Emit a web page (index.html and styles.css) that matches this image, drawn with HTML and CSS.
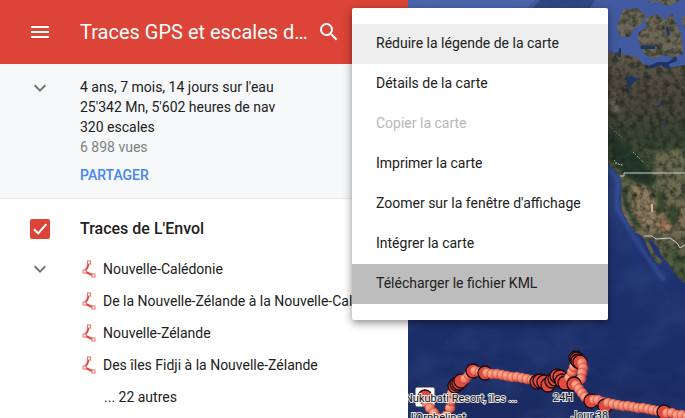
FILE: index.html
```html
<!DOCTYPE html>
<html lang="fr">
<head>
<meta charset="utf-8">
<meta name="viewport" content="width=device-width, initial-scale=1">
<title>Traces GPS et escales</title>
<link rel="stylesheet" href="styles.css">
</head>
<body>
<div class="app">
  <aside class="legend">
    <header class="bar">
      <button class="icon-button" type="button" aria-label="Menu">
        <svg width="24" height="24" viewBox="0 0 24 24"><path fill="#fff" d="M3 18h18v-2H3v2zm0-5h18v-2H3v2zm0-7v2h18V6H3z"/></svg>
      </button>
      <h1 class="title">Traces GPS et escales d…</h1>
      <button class="icon-button" type="button" aria-label="Rechercher">
        <svg width="24" height="24" viewBox="0 0 24 24"><path fill="#fff" d="M15.5 14h-.79l-.28-.27A6.47 6.47 0 0 0 16 9.5 6.5 6.5 0 1 0 9.500 16c1.610 0 3.090-.59 4.230-1.570l.27.28v.79l5 4.990L20.490 19l-4.990-5zm-6 0C7.010 14 5 11.990 5 9.500S7.010 5 9.500 5 14 7.010 14 9.500 11.990 14 9.500 14z"/></svg>
      </button>
    </header>

    <section class="info">
      <button class="icon-button toggle" type="button" aria-label="Réduire la description">
        <svg width="24" height="24" viewBox="0 0 24 24"><path class="chevron" d="M6.700 8.300 12 13.600l5.300-5.300"/></svg>
      </button>
      <div class="info-text">
        <p>4 ans, 7 mois, 14 jours sur l'eau</p>
        <p>25'342 Mn, 5'602 heures de nav</p>
        <p>320 escales</p>
        <p class="views">6 898 vues</p>
        <button class="share" type="button">PARTAGER</button>
      </div>
    </section>

    <section class="layer">
      <div class="layer-head">
        <span class="check">
          <input id="layer" type="checkbox" checked>
          <svg width="20" height="20" viewBox="0 0 20 20"><path d="M4 10.200 8.200 14.300 16.300 5.200" fill="none" stroke="#fff" stroke-width="2"/></svg>
        </span>
        <label for="layer">Traces de L'Envol</label>
      </div>
      <div class="layer-body">
        <button class="icon-button toggle" type="button" aria-label="Réduire le calque">
          <svg width="24" height="24" viewBox="0 0 24 24"><path class="chevron" d="M6.700 9.300 12 14.600l5.300-5.300"/></svg>
        </button>
        <ul class="traces">
          <li><svg class="trace" viewBox="0 0 15 18"><use href="#trace"/></svg>Nouvelle-Calédonie</li>
          <li><svg class="trace" viewBox="0 0 15 18"><use href="#trace"/></svg>De la Nouvelle-Zélande à la Nouvelle-Calédonie</li>
          <li><svg class="trace" viewBox="0 0 15 18"><use href="#trace"/></svg>Nouvelle-Zélande</li>
          <li><svg class="trace" viewBox="0 0 15 18"><use href="#trace"/></svg>Des îles Fidji à la Nouvelle-Zélande</li>
          <li class="more">... 22 autres</li>
        </ul>
      </div>
    </section>
  </aside>

  <main class="map">
    <svg class="map-art" viewBox="408 0 277 418" preserveAspectRatio="xMinYMin slice" role="img" aria-label="Carte satellite">
      <defs>
        <symbol id="trace" viewBox="0 0 15 18">
          <path d="M7 3 5.300 7.500 2.500 11.500 11.500 15.500" fill="none" stroke="#e04438" stroke-width="2"/>
          <g fill="#fff" stroke="#ec7268"><rect x="5.500" y="1" width="3" height="3"/><rect x="1" y="10" width="3" height="3"/><rect x="10" y="14" width="3" height="3"/></g>
        </symbol>
        <linearGradient id="sea" x1="0" y1="0" x2="0" y2="1">
          <stop offset="0" stop-color="#40599c"/><stop offset=".3" stop-color="#2f4686"/><stop offset=".6" stop-color="#1f3270"/><stop offset=".8" stop-color="#1c2e69"/><stop offset="1" stop-color="#1a2a60"/>
        </linearGradient>
        <linearGradient id="land" x1="0" y1="0" x2="0" y2="1">
          <stop offset="0" stop-color="#615c4c"/><stop offset=".16" stop-color="#4e483f"/><stop offset=".28" stop-color="#46463b"/><stop offset=".38" stop-color="#35432f"/><stop offset=".5" stop-color="#4c563e"/><stop offset=".72" stop-color="#7d6f57"/><stop offset="1" stop-color="#46543b"/>
        </linearGradient>
        <radialGradient id="bead" cx=".3" cy=".35" r=".75">
          <stop offset="0" stop-color="#ffb08e"/><stop offset=".5" stop-color="#f5806a"/><stop offset="1" stop-color="#c8382f"/>
        </radialGradient>
        <filter id="soft" x="-20%" y="-20%" width="140%" height="140%" color-interpolation-filters="sRGB"><feGaussianBlur stdDeviation="1.500"/></filter>
        <filter id="grain" x="0" y="0" width="100%" height="100%" color-interpolation-filters="sRGB">
          <feTurbulence type="fractalNoise" baseFrequency=".16" numOctaves="4" seed="6"/>
          <feColorMatrix values="0 0 0 0 .12  0 0 0 0 .15  0 0 0 0 .11  2 0 0 0 -.8"/>
          <feComposite in2="SourceGraphic" operator="in"/>
        </filter>
        <filter id="swell" x="0" y="0" width="100%" height="100%" color-interpolation-filters="sRGB">
          <feTurbulence type="fractalNoise" baseFrequency=".022 .03" numOctaves="5" seed="11"/>
          <feColorMatrix values="0 0 0 0 .34  0 0 0 0 .44  0 0 0 0 .66  1.400 0 0 0 -.55"/>
        </filter>
        <path id="coast" d="M607 50 613 54 620 51 625 55 636 56 642 63 652 67 663 65 672 67 685 65V283L679 279 671 267 662 256 657 246 652 241 648 240 652 248 655 254 662 261 660 265 656 262 650 253 645 241 641 235 634 232 628 222 622 211 621 197 622 186 620 176 611 167 607 161Z"/>
        <path id="islands" d="M623 10 637 8 646 15 641 25 633 29 630 37 620 36 617 26ZM646 3 658 2 668 6 681 0H660L650 1ZM645 18 657 14 665 20 672 13 678 28 682 37 683 54 674 58 663 55 653 59 644 54 641 46 638 40 639 32 647 27ZM681 18 685 16V30Z"/>
      </defs>
      <rect x="408" width="277" height="418" fill="url(#sea)"/>
      <path d="M408 0H535L527 8H408Z" fill="#4a65ac"/>
      <path d="M540 0H595L590 8H533Z" fill="#2c4681"/>
      <path d="M606 0H685V68L650 67 628 58 606 49Z" fill="#4059a0"/>
      <path d="M607 167 618 180 617 208 632 234 648 258 664 280" fill="none" stroke="#3c57a0" stroke-width="4" opacity=".6" filter="url(#soft)"/>
      <rect x="408" width="277" height="418" filter="url(#swell)" opacity=".3"/>
      <use href="#coast" fill="url(#land)"/>
      <use href="#islands" fill="#6b6655"/>
      <g filter="url(#soft)">
        <path d="M609 130 622 142 638 155 650 170 656 182 650 187 635 181 624 175 612 160Z" fill="#25392b"/>
        <path d="M654 152 685 149V200L665 196 657 182Z" fill="#6b6b50"/>
        <path d="M632 184 645 186 656 198 662 220 655 232 641 228 633 211Z" fill="#8f7b60"/>
        <path d="M657 190 665 193 662 212 656 217ZM669 204 677 206 676 228 667 219Z" fill="#38492f"/>
        <path d="M657 219 668 220 671 230 662 232Z" fill="#b18163"/>
        <path d="M664 243 677 250 684 262V278L672 262Z" fill="#465a3c"/>
        <path d="M624 188 625 203 632 217 640 228" fill="none" stroke="#2e4830" stroke-width="4"/>
        <path d="M609 88 616 93 620 115 611 110Z" fill="#68625a"/>
      </g>
      <g filter="url(#grain)"><use href="#coast"/><use href="#islands"/></g>
      <path d="M648 66 658 62 668 62 676 56 677 61 669 64 670 70 665 68 661 65 650 69ZM640 46 655 46 655 49 641 49ZM666 27 668 26 670 34 667 37ZM624 79 632 76 639 79 633 83 630 88 626 86 629 81ZM619 48 621 48 621 57 618 57ZM655 107 663 103 660 107ZM662 123 670 125 663 125Z" fill="#1e3463"/>
      <g fill="none" stroke="#d0d5d0" stroke-dasharray="2 1 1 2" opacity=".7">
        <path d="M614 160 618 164 624 166M615 163 623 165M633 152 638 157 643 162"/>
        <path d="M610 126 615 132 622 137" opacity=".6"/>
      </g>
      <path d="M652 204V212" stroke="#c4b79b" stroke-width="2"/>
      <path d="M620 176H624V173H685M644 236H652L656 239 670 238 677 243 680 248 685 245" fill="none" stroke="#ccd2cc"/>
      <g>
        <rect x="415" y="387" width="20" height="20" rx="2" fill="#fff" stroke="#29334e"/>
        <path d="M418 397 425 389 432 397Z" fill="#173b63"/>
      </g>
      <g id="track"></g>
      <g class="place">
        <text x="405" y="402">Nukubati Resort, îles ...</text>
        <text x="411" y="421">l'Orphelinat</text>
        <text x="553" y="401">24H</text>
        <text x="571" y="419">Jour 38</text>
      </g>
    </svg>
  </main>

  <div class="menu" role="menu">
    <button class="hover" type="button" role="menuitem">Réduire la légende de la carte</button>
    <button type="button" role="menuitem">Détails de la carte</button>
    <button type="button" role="menuitem" disabled>Copier la carte</button>
    <button type="button" role="menuitem">Imprimer la carte</button>
    <button type="button" role="menuitem">Zoomer sur la fenêtre d'affichage</button>
    <button type="button" role="menuitem">Intégrer la carte</button>
    <button class="active" type="button" role="menuitem">Télécharger le fichier KML</button>
  </div>
</div>
<script src="track.js"></script>
</body>
</html>
```
FILE: styles.css
```css
* {
  box-sizing: border-box;
}

body {
  margin: 0;
  font: 14px/20px Roboto, "Liberation Sans", sans-serif;
  color: #212121;
}

button {
  padding: 0;
  border: 0;
  background: none;
  color: inherit;
  font: inherit;
  text-align: left;
}

p,
h1,
ul {
  margin: 0;
  padding: 0;
}

svg {
  display: block;
}

.app {
  position: relative;
  display: flex;
  min-height: 100vh;
  overflow: hidden;
}

.legend {
  flex: 0 0 408px;
  min-width: 0;
  background: #fff;
}

.bar {
  display: flex;
  align-items: center;
  height: 64px;
  padding: 0 28px;
  background: #db4437;
}

.icon-button {
  flex: none;
  width: 24px;
  height: 24px;
}

.title {
  width: 225px;
  margin: 0 12px 0 28px;
  color: #fff;
  font-size: 20px;
  font-weight: 400;
  line-height: 28px;
  white-space: nowrap;
}

.info {
  display: flex;
  gap: 28px;
  padding: 13px 28px;
  border-bottom: 1px solid #e4e6e8;
  background: #f6f8fa;
}

.chevron {
  fill: none;
  stroke: #757575;
  stroke-width: 2;
}

.views {
  color: #808080;
}

.share {
  display: block;
  margin-top: 8px;
  color: #4285f4;
  font-weight: 500;
}

.layer {
  padding: 20px 0 4px 28px;
}

.layer-head {
  display: flex;
  align-items: center;
  gap: 30px;
  padding-left: 2px;
  font-size: 16px;
  font-weight: 500;
}

.check {
  display: grid;
  width: 20px;
  height: 20px;
}

.check input,
.check svg {
  grid-area: 1 / 1;
}

.check input {
  width: 20px;
  height: 20px;
  margin: 0;
  border-radius: 2px;
  background: #db4437;
  appearance: none;
}

.check svg {
  z-index: 1;
  pointer-events: none;
}

.layer-body {
  display: flex;
  gap: 28px;
  margin-top: 14px;
}

.layer-body .toggle {
  margin-top: 4px;
}

.traces {
  flex: 1;
  min-width: 0;
  overflow: hidden;
  list-style: none;
}

.traces li {
  display: flex;
  align-items: center;
  gap: 6px;
  height: 32px;
  padding-left: 2px;
  white-space: nowrap;
}

.trace {
  flex: none;
  width: 15px;
  height: 18px;
}

.traces .more {
  padding-left: 24px;
}

.map {
  position: relative;
  flex: 1;
  min-width: 0;
  background: #1c2c62;
}

.map-art {
  position: absolute;
  inset: 0;
  width: 100%;
  height: 100%;
}

.place {
  fill: #111;
  stroke: #fff;
  stroke-opacity: 0.85;
  stroke-width: 2px;
  paint-order: stroke;
  font-size: 11px;
}

.menu {
  position: absolute;
  top: 8px;
  left: 352px;
  display: flex;
  flex-direction: column;
  width: 256px;
  padding: 16px 0;
  border-radius: 2px;
  background: #fff;
  box-shadow: 0 3px 9px rgba(0, 0, 0, 0.45);
}

.menu button {
  height: 40px;
  padding: 0 24px 2px;
}

.menu .hover {
  background: #eee;
}

.menu .active {
  background: #bdbdbd;
}

.menu button:disabled {
  color: #b8b8b8;
}
```
FILE: track.js
```js
// Recorded positions in drawing order: x, y, and 1 for a stopover.
const positions = [
  [425, 397, 1], [427, 403], [430, 408], [434, 413], [438, 418],
  [446, 416], [450, 408], [451, 401], [452, 393],
  [455, 386, 1], [457, 384, 1], [459, 383, 1], [461, 381, 1], [465, 379], [469, 375],
  [473, 371, 1], [475, 371], [480, 372], [485, 373, 1], [487, 373],
  [492, 374], [497, 374], [502, 375], [507, 376], [512, 377], [517, 377], [522, 378], [527, 379], [532, 380],
  [537, 382, 1], [540, 381, 1], [544, 382, 1], [548, 385, 1], [552, 381, 1],
  [555, 379, 1], [557, 376, 1], [560, 377, 1], [562, 381, 1], [565, 383, 1],
  [569, 378], [572, 372], [574, 367],
  [576, 358, 1], [577, 359, 1], [578, 361, 1], [580, 362, 1],
  [582, 363], [583, 368], [582, 373], [581, 379],
  [574, 384, 1], [576, 385], [579, 389], [582, 393], [585, 397],
  [591, 401, 1], [594, 400], [598, 400], [603, 402], [605, 406, 1],
  [608, 403], [613, 404], [618, 405], [623, 406], [628, 406], [633, 407],
  [638, 408], [643, 408], [648, 409], [653, 410], [658, 411],
  [664, 412, 1], [667, 413], [672, 413], [677, 415], [682, 415], [687, 416]
];

const track = document.getElementById("track");

for (const [x, y, stop] of positions) {
  const dot = document.createElementNS("http://www.w3.org/2000/svg", "circle");
  dot.setAttribute("cx", x);
  dot.setAttribute("cy", y);
  dot.setAttribute("r", stop ? 7 : 5);
  dot.setAttribute("fill", stop ? "#e3493c" : "url(#bead)");
  dot.setAttribute("stroke", stop ? "#1a0a10" : "#a5403f");
  dot.setAttribute("stroke-width", stop ? 1.3 : 0.5);
  track.append(dot);
}
```
